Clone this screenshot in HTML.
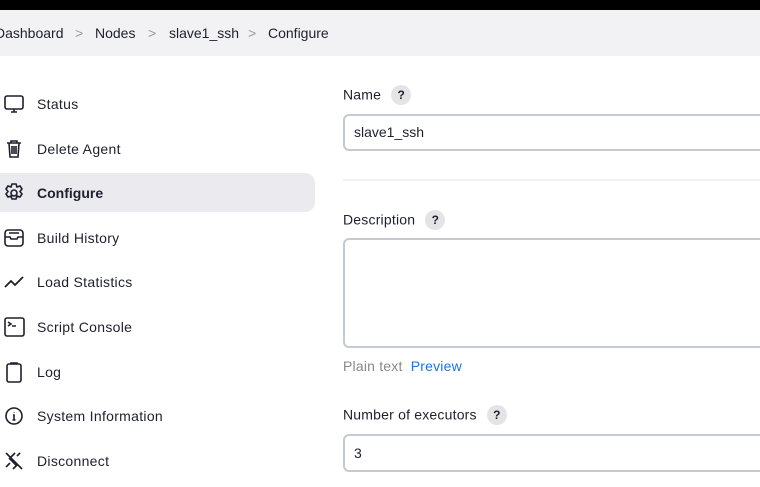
<!DOCTYPE html>
<html><head><style>
*{box-sizing:border-box;margin:0;padding:0}
body{width:760px;height:487px;overflow:hidden;background:#fff;font-family:"Liberation Sans",sans-serif;color:#1f1f2e;position:relative}
.top{position:absolute;left:0;top:0;width:760px;height:10px;background:#000}
.bc{position:absolute;left:0;top:10px;width:760px;height:46px;background:#f2f2f5;font-size:14px}
.bc span{position:absolute;top:15px}
.sep{color:#999}
.item{position:absolute;left:0;width:315px;height:39px;font-size:14px;letter-spacing:0.3px}
.item .t{position:absolute;left:37px;top:11px}
.item svg{position:absolute;left:3px;top:8px}
.act{background:#eaeaef;border-radius:0 10px 10px 0;font-weight:bold;letter-spacing:0}
.act .t{top:12px}
.act svg{top:9px}
.lbl{position:absolute;left:343px;font-size:14px;letter-spacing:0.2px}
.help{display:inline-block;width:20px;height:20px;border-radius:50%;background:#e4e4e6;font-size:12px;font-weight:bold;text-align:center;line-height:20px;margin-left:10px;vertical-align:middle;position:relative;top:-1px;letter-spacing:0}
.inp{position:absolute;left:343px;width:430px;border:2px solid #c4cacf;border-radius:6px;font-size:14px;padding-left:9px}
</style></head><body>
<div class="top"></div>
<div class="bc">
<span style="left:-5px">Dashboard</span><span class="sep" style="left:75px">&gt;</span>
<span style="left:95px">Nodes</span><span class="sep" style="left:148px">&gt;</span>
<span style="left:169px">slave1_ssh</span><span class="sep" style="left:248px">&gt;</span>
<span style="left:268px">Configure</span>
</div>
<div class="item" style="top:85px"><svg width="22" height="22" viewBox="0 0 22 22" fill="none" stroke="#1f1f2e" stroke-width="1.6"><rect x="2" y="3" width="18" height="13" rx="2"/><path d="M8 19h6M11 16v3"/></svg><span class="t">Status</span></div>
<div class="item" style="top:130px"><svg width="22" height="22" viewBox="0 0 22 22" fill="none" stroke="#1f1f2e" stroke-width="1.6"><path d="M4 5h14M8 5V3h6v2M6 5l1 14h8l1-14M9 8v8M11 8v8M13 8v8"/></svg><span class="t">Delete Agent</span></div>
<div class="item act" style="top:173px"><svg width="22" height="22" viewBox="0 0 22 22" fill="none" stroke="#1f1f2e" stroke-width="1.6"><path d="M9 2h4l1 3 3-1 2 3-2 2.5 2 2.5-2 3-3-1-1 3H9l-1-3-3 1-2-3 2-2.5L3 7l2-3 3 1z"/><circle cx="11" cy="11" r="3"/></svg><span class="t">Configure</span></div>
<div class="item" style="top:219px"><svg width="22" height="22" viewBox="0 0 22 22" fill="none" stroke="#1f1f2e" stroke-width="1.6"><rect x="2" y="3" width="18" height="16" rx="3"/><path d="M2 10h5l1 2h6l1-2h5M6 6h10"/></svg><span class="t">Build History</span></div>
<div class="item" style="top:263px"><svg width="22" height="22" viewBox="0 0 22 22" fill="none" stroke="#1f1f2e" stroke-width="1.8"><path d="M2 16l6-6 4 4 8-8"/></svg><span class="t">Load Statistics</span></div>
<div class="item" style="top:308px"><svg width="22" height="22" viewBox="0 0 22 22" fill="none" stroke="#1f1f2e" stroke-width="1.6"><rect x="2" y="2" width="19" height="18" rx="2"/><path d="M5 6l3 2-3 2M9 10h4"/></svg><span class="t">Script Console</span></div>
<div class="item" style="top:353px"><svg width="22" height="22" viewBox="0 0 22 22" fill="none" stroke="#1f1f2e" stroke-width="1.6"><rect x="4" y="3" width="14" height="18" rx="2"/><path d="M8 3V2h6v1"/></svg><span class="t">Log</span></div>
<div class="item" style="top:397px"><svg width="22" height="22" viewBox="0 0 22 22" fill="none" stroke="#1f1f2e" stroke-width="1.6"><circle cx="11" cy="11" r="8"/><path d="M10 10h1v5M9.5 15h3M11 7v.5"/></svg><span class="t">System Information</span></div>
<div class="item" style="top:442px"><svg width="22" height="22" viewBox="0 0 22 22" fill="none" stroke="#1f1f2e" stroke-width="1.6"><path d="M3 3l16 16M7 8l5-5M15 14l-5 5M6 8l8 8M17 3l-3 3M3 17l4-4"/></svg><span class="t">Disconnect</span></div>

<div class="lbl" style="top:86px">Name<span class="help">?</span></div>
<div class="inp" style="top:114px;height:37px;line-height:33px">slave1_ssh</div>
<div style="position:absolute;left:343px;top:179px;width:420px;height:2px;background:#f0f1f4"></div>
<div class="lbl" style="top:211px">Description<span class="help">?</span></div>
<div class="inp" style="top:238px;height:110px"></div>
<div class="lbl" style="top:358px;color:#888">Plain text <span style="color:#1a73e8;margin-left:4px">Preview</span></div>
<div class="lbl" style="top:406px">Number of executors<span class="help">?</span></div>
<div class="inp" style="top:434px;height:38px;line-height:34px">3</div>
</body></html>
